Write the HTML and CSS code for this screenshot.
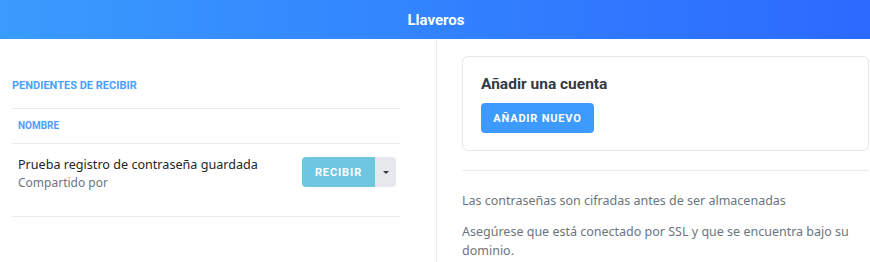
FILE: index.html
```html
<!DOCTYPE html>
<html lang="es">
<head>
<meta charset="utf-8">
<title>Llaveros</title>
<link rel="stylesheet" href="styles.css">
</head>
<body>
<header class="topbar"><h1 class="topbar-title">Llaveros</h1></header>
<main class="layout">
  <section class="col-left">
    <h2 class="section-title">PENDIENTES DE RECIBIR</h2>
    <div class="table">
      <div class="table-head">NOMBRE</div>
      <div class="table-row">
        <div class="row-info">
          <div class="row-name">Prueba registro de contraseña guardada</div>
          <div class="row-sub">Compartido por</div>
        </div>
        <div class="btn-group">
          <button class="btn btn-receive">RECIBIR</button>
          <button class="btn btn-caret"><span class="caret"></span></button>
        </div>
      </div>
    </div>
  </section>
  <section class="col-right">
    <div class="card">
      <h3 class="card-title">Añadir una cuenta</h3>
      <button class="btn btn-primary">AÑADIR NUEVO</button>
    </div>
    <hr class="divider">
    <p class="note">Las contraseñas son cifradas antes de ser almacenadas</p>
    <p class="note">Asegúrese que está conectado por SSL y que se encuentra bajo su dominio.</p>
  </section>
</main>
</body>
</html>
```
FILE: styles.css
```css
* { box-sizing: border-box; }
html, body { margin: 0; padding: 0; background: #fff; }
body { font-family: "Noto Sans", "Open Sans", sans-serif; color: #212529; }

.topbar {
  height: 39px;
  background: linear-gradient(90deg, #3a9bfd 0%, #3385fe 45%, #2c69ff 100%);
  display: flex;
  align-items: center;
  justify-content: center;
}
.topbar-title {
  margin: 0;
  color: #fff;
  font-family: Roboto, "Liberation Sans", sans-serif;
  font-weight: 700;
  font-size: 15px;
  padding-left: 2px;
}

.layout {
  display: grid;
  grid-template-columns: 437px 1fr;
  min-height: 223px;
}
.col-left {
  border-right: 1px solid #e9ecef;
  padding: 0 36px 0 12px;
}
.section-title {
  margin: 0;
  padding-top: 40px;
  height: 69px;
  font-family: Roboto, "Liberation Sans", sans-serif;
  font-weight: 700;
  font-size: 11px;
  color: #4aa0ff;
}
.table-head {
  border-top: 1px solid #e9ecef;
  border-bottom: 1px solid #e9ecef;
  height: 36px;
  padding: 11px 0 0 6px;
  font-family: Roboto, "Liberation Sans", sans-serif;
  font-weight: 700;
  font-size: 10px;
  color: #4f9dff;
}
.table-row {
  display: flex;
  justify-content: space-between;
  align-items: flex-start;
  padding: 11px 4px 0 6px;
  height: 73px;
  border-bottom: 1px solid #e9ecef;
}
.row-name { font-size: 12.6px; color: #212529; line-height: 19px; }
.row-sub { font-size: 12px; color: #6c757d; line-height: 17px; }

.btn {
  border: 0;
  font-family: Roboto, "Liberation Sans", sans-serif;
  font-weight: 700;
  cursor: pointer;
}
.btn-group { display: flex; margin-top: 2px; }
.btn-receive {
  background: #6ec6e0;
  color: #fff;
  font-size: 11px;
  letter-spacing: 0.9px;
  height: 30px;
  width: 73px;
  border-radius: 4px 0 0 4px;
}
.btn-caret {
  background: #e6e8ec;
  height: 30px;
  width: 21px;
  border-radius: 0 4px 4px 0;
  display: flex;
  align-items: center;
  justify-content: center;
  padding: 0;
}
.caret {
  width: 0; height: 0;
  border-left: 3px solid transparent;
  border-right: 3px solid transparent;
  border-top: 3px solid #343a40;
}

.col-right { padding: 17px 1px 0 25px; }
.card {
  border: 1px solid #e5e7eb;
  border-radius: 6px;
  padding: 17px 18px 18px 18px;
  height: 95px;
}
.card-title {
  margin: 0 0 9px 0;
  font-family: Roboto, "Liberation Sans", sans-serif;
  font-weight: 700;
  font-size: 15.5px;
  color: #343a40;
  line-height: 20px;
}
.btn-primary {
  background: #3d9bff;
  color: #fff;
  font-size: 11px;
  letter-spacing: 0.8px;
  height: 30px;
  width: 113px;
  border-radius: 4px;
}
.divider {
  border: 0;
  border-top: 1px solid #e9ecef;
  margin: 19px 0 20px 0;
}
.note {
  margin: 0 0 12px 0;
  font-size: 12.5px;
  line-height: 19px;
  color: #6c757d;
}
```
